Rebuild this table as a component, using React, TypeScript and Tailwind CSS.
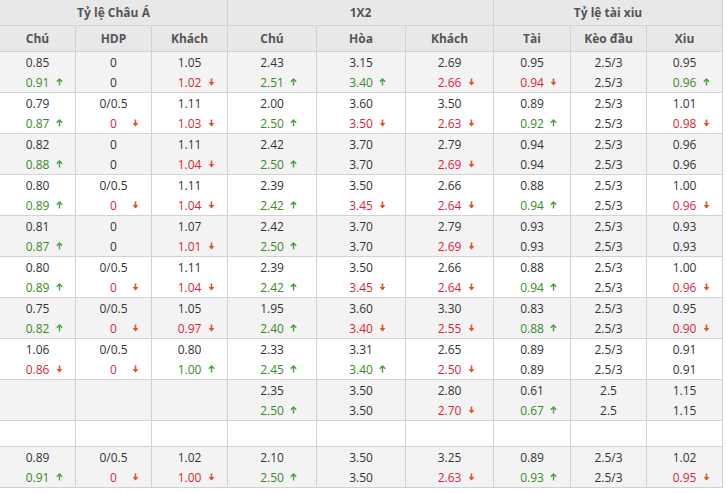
import React from "react";

type Row = string[][] | null;

const rows: Row[] = [
  [["0.85", "0.91+"], ["0", "0"], ["1.05", "1.02-"], ["2.43", "2.51+"], ["3.15", "3.40+"], ["2.69", "2.66-"], ["0.95", "0.94-"], ["2.5/3", "2.5/3"], ["0.95", "0.96+"]],
  [["0.79", "0.87+"], ["0/0.5", "0-"], ["1.11", "1.03-"], ["2.00", "2.50+"], ["3.60", "3.50-"], ["3.50", "2.63-"], ["0.89", "0.92+"], ["2.5/3", "2.5/3"], ["1.01", "0.98-"]],
  [["0.82", "0.88+"], ["0", "0"], ["1.11", "1.04-"], ["2.42", "2.50+"], ["3.70", "3.70"], ["2.79", "2.69-"], ["0.94", "0.94"], ["2.5/3", "2.5/3"], ["0.96", "0.96"]],
  [["0.80", "0.89+"], ["0/0.5", "0-"], ["1.11", "1.04-"], ["2.39", "2.42+"], ["3.50", "3.45-"], ["2.66", "2.64-"], ["0.88", "0.94+"], ["2.5/3", "2.5/3"], ["1.00", "0.96-"]],
  [["0.81", "0.87+"], ["0", "0"], ["1.07", "1.01-"], ["2.42", "2.50+"], ["3.70", "3.70"], ["2.79", "2.69-"], ["0.93", "0.93"], ["2.5/3", "2.5/3"], ["0.93", "0.93"]],
  [["0.80", "0.89+"], ["0/0.5", "0-"], ["1.11", "1.04-"], ["2.39", "2.42+"], ["3.50", "3.45-"], ["2.66", "2.64-"], ["0.88", "0.94+"], ["2.5/3", "2.5/3"], ["1.00", "0.96-"]],
  [["0.75", "0.82+"], ["0/0.5", "0-"], ["1.05", "0.97-"], ["1.95", "2.40+"], ["3.60", "3.40-"], ["3.30", "2.55-"], ["0.83", "0.88+"], ["2.5/3", "2.5/3"], ["0.95", "0.90-"]],
  [["1.06", "0.86-"], ["0/0.5", "0-"], ["0.80", "1.00+"], ["2.33", "2.45+"], ["3.31", "3.40+"], ["2.65", "2.50-"], ["0.89", "0.89"], ["2.5/3", "2.5/3"], ["0.91", "0.91"]],
  [["", ""], ["", ""], ["", ""], ["2.35", "2.50+"], ["3.50", "3.50"], ["2.80", "2.70-"], ["0.61", "0.67+"], ["2.5", "2.5"], ["1.15", "1.15"]],
  null,
  [["0.89", "0.91+"], ["0/0.5", "0-"], ["1.02", "1.00-"], ["2.10", "2.50+"], ["3.50", "3.50"], ["3.25", "2.63-"], ["0.89", "0.93+"], ["2.5/3", "2.5/3"], ["1.02", "0.95-"]],
];

const font = { fontFamily: '"Open Sans", "Noto Sans", sans-serif' };

function Up() {
  return (
    <svg width="7" height="8" viewBox="0 0 7 8" className="absolute left-[calc(50%+18px)] top-[5px]">
      <path d="M3.5 7.5 V1.2 M0.8 3.8 L3.5 1 L6.2 3.8" stroke="#46a33a" strokeWidth="1.4" fill="none" />
    </svg>
  );
}

function Down() {
  return (
    <svg width="7" height="8" viewBox="0 0 7 8" className="absolute left-[calc(50%+18px)] top-[5px]">
      <path d="M3.5 0.5 V6.5" stroke="#e4531f" strokeWidth="1.6" fill="none" />
      <path d="M0.6 3.9 L3.5 7.4 L6.4 3.9 Z" fill="#e4531f" />
    </svg>
  );
}

function Second({ s }: { s: string }) {
  const last = s.slice(-1);
  if (last === "+") {
    return (
      <div className="relative h-[20px] text-[#3a8a26]">
        {s.slice(0, -1)}
        <Up />
      </div>
    );
  }
  if (last === "-") {
    return (
      <div className="relative h-[20px] text-[#dc1f3a]">
        {s.slice(0, -1)}
        <Down />
      </div>
    );
  }
  return <div className="h-[20px]">{s}</div>;
}

const grid = "grid grid-cols-[76px_76px_76px_89px_89px_88px_77px_76px_76px] w-[723px]";

export default function App() {
  return (
    <div className="w-[727px] h-[493px] bg-white text-[12px] leading-[20px] text-[#333]" style={font}>
      <div className={grid + " bg-[#e8e8e8] text-[#555] font-bold"}>
        <div className="col-span-3 h-[26px] flex items-center justify-center border-r border-b border-[#d2d2d2]">Tỷ lệ Châu Á</div>
        <div className="col-span-3 h-[26px] flex items-center justify-center border-r border-b border-[#d2d2d2]">1X2</div>
        <div className="col-span-3 h-[26px] flex items-center justify-center border-r border-b border-[#d2d2d2]">Tỷ lệ tài xiu</div>
        {["Chú", "HDP", "Khách", "Chú", "Hòa", "Khách", "Tài", "Kèo đầu", "Xiu"].map((h, i) => (
          <div key={i} className="h-[26px] flex items-center justify-center border-r border-b border-[#d2d2d2]">
            {h}
          </div>
        ))}
      </div>
      {rows.map((r, ri) => {
        const bg = ri % 2 === 0 ? "bg-[#f3f3f3]" : "bg-white";
        if (!r) {
          return (
            <div key={ri} className={grid + " " + bg}>
              {Array.from({ length: 9 }).map((_, i) => (
                <div key={i} className="h-[26px] border-r border-b border-[#d2d2d2]" />
              ))}
            </div>
          );
        }
        return (
          <div key={ri} className={grid + " " + bg}>
            {r.map((c, ci) => (
              <div key={ci} className="h-[41px] pt-[1px] border-r border-b border-[#d2d2d2] text-center">
                <div className="h-[20px]">{c[0]}</div>
                <Second s={c[1]} />
              </div>
            ))}
          </div>
        );
      })}
    </div>
  );
}
